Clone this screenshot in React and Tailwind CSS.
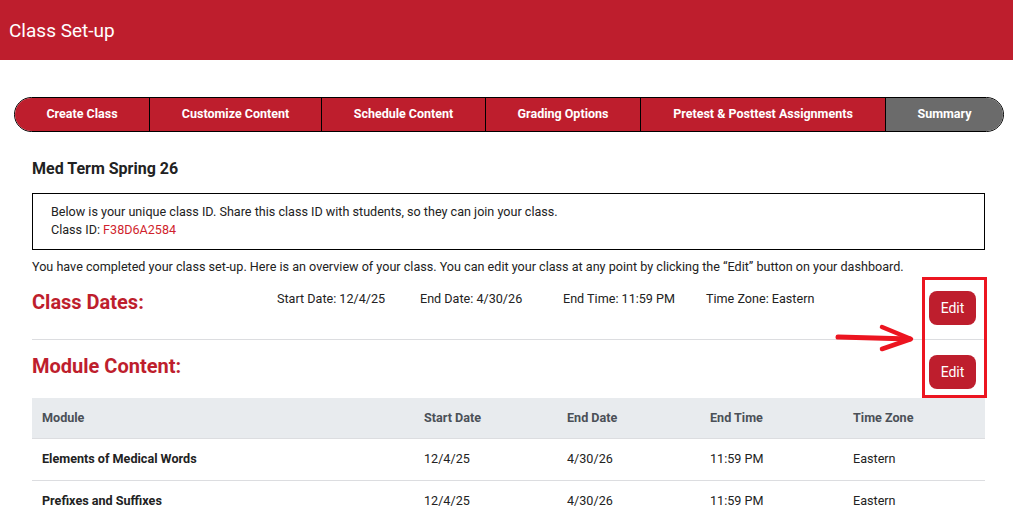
import React from 'react';

const tabs = [
  { label: 'Create Class', w: 'w-[135px]' },
  { label: 'Customize Content', w: 'w-[172px]' },
  { label: 'Schedule Content', w: 'w-[164px]' },
  { label: 'Grading Options', w: 'w-[155px]' },
  { label: 'Pretest & Posttest Assignments', w: 'w-[245px]' },
];

const modules = [
  { name: 'Elements of Medical Words', start: '12/4/25', end: '4/30/26', time: '11:59 PM', zone: 'Eastern' },
  { name: 'Prefixes and Suffixes', start: '12/4/25', end: '4/30/26', time: '11:59 PM', zone: 'Eastern' },
];

const EditButton = () => (
  <button className="w-[47px] h-[34px] rounded-lg bg-[#be1e2d] text-white text-[14px]">Edit</button>
);

const App = () => {
  return (
    <div className="relative min-h-screen bg-white text-[#222] font-['Roboto',sans-serif]">
      {/* header */}
      <div className="h-[60px] bg-[#be1e2d] flex items-center px-[9px] pt-[2px]">
        <h1 className="text-white text-[19px]">Class Set-up</h1>
      </div>

      {/* step tabs */}
      <div className="mt-[37px] ml-[14px] mr-[9px] h-[35px] flex border border-black rounded-full overflow-hidden text-white text-[12.5px] font-bold">
        {tabs.map((t) => (
          <div key={t.label} className={`${t.w} bg-[#be1e2d] border-r border-black flex items-center justify-center`}>
            {t.label}
          </div>
        ))}
        <div className="flex-1 bg-[#6b6b6b] flex items-center justify-center">Summary</div>
      </div>

      <div className="pl-[32px] pr-[28px]">
        <h2 className="mt-[25px] text-[16px] font-bold text-[#222]">Med Term Spring 26</h2>

        <div className="mt-[12px] border border-black px-[18px] pt-[9px] pb-[10px] text-[12.6px] leading-[18px] text-[#222]">
          <p>Below is your unique class ID. Share this class ID with students, so they can join your class.</p>
          <p>Class ID: <span className="text-[#d01f2e]">F38D6A2584</span></p>
        </div>

        <p className="mt-[8px] text-[12.6px] leading-[18px]">
          You have completed your class set-up. Here is an overview of your class. You can edit your class at any point by clicking the “Edit” button on your dashboard.
        </p>

        {/* class dates */}
        <div className="h-[64px] flex items-start border-b border-[#dcdde0]">
          <h3 className="w-[245px] mt-[11px] text-[20px] font-bold text-[#be1e2d]">Class Dates:</h3>
          <div className="flex text-[12.6px] mt-[14px]">
            <span className="w-[143px]">Start Date: 12/4/25</span>
            <span className="w-[143px]">End Date: 4/30/26</span>
            <span className="w-[143px]">End Time: 11:59 PM</span>
            <span className="w-[143px]">Time Zone: Eastern</span>
          </div>
          <div className="ml-auto mr-[9px] mt-[15px]">
            <EditButton />
          </div>
        </div>

        {/* module content */}
        <div className="h-[58px] flex items-start">
          <h3 className="mt-[11px] text-[20px] font-bold text-[#be1e2d]">Module Content:</h3>
          <div className="ml-auto mr-[9px] mt-[15px]">
            <EditButton />
          </div>
        </div>

        <table className="w-full text-[12.6px] border-collapse">
          <thead>
            <tr className="bg-[#e8ebee] text-[#4b5057] h-[40px] text-left border-b border-[#dcdde0]">
              <th className="w-[382px] pl-[10px] pt-[2px] font-bold">Module</th>
              <th className="w-[143px] pl-[10px] pt-[2px] font-bold">Start Date</th>
              <th className="w-[143px] pl-[10px] pt-[2px] font-bold">End Date</th>
              <th className="w-[143px] pl-[10px] pt-[2px] font-bold">End Time</th>
              <th className="pl-[10px] pt-[2px] font-bold">Time Zone</th>
            </tr>
          </thead>
          <tbody>
            {modules.map((m) => (
              <tr key={m.name} className="h-[42px] border-b border-[#dcdde0]">
                <td className="pl-[10px] font-bold">{m.name}</td>
                <td className="pl-[10px]">{m.start}</td>
                <td className="pl-[10px]">{m.end}</td>
                <td className="pl-[10px]">{m.time}</td>
                <td className="pl-[10px]">{m.zone}</td>
              </tr>
            ))}
          </tbody>
        </table>
      </div>

      {/* annotation overlay */}
      <div className="absolute left-[922px] top-[277px] w-[65px] h-[121px] border-[3px] border-[#ec1520] pointer-events-none" />
      <svg className="absolute left-[830px] top-[320px] pointer-events-none" width="90" height="36" viewBox="0 0 90 36">
        <path d="M8 17 L80 19" stroke="#ec1520" strokeWidth="5" strokeLinecap="round" fill="none" />
        <path d="M52 7 L81 19 L52 29" stroke="#ec1520" strokeWidth="4.5" strokeLinecap="round" strokeLinejoin="round" fill="none" />
      </svg>
    </div>
  );
};

export default App;
